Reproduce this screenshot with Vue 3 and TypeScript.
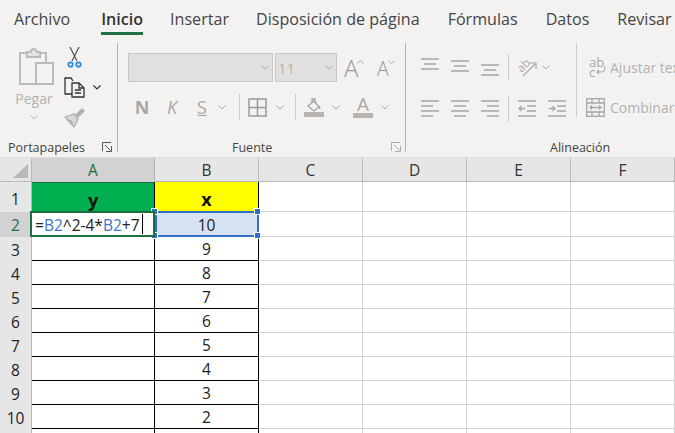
<script setup lang="ts">
const tabs = ['Archivo', 'Inicio', 'Insertar', 'Disposición de página', 'Fórmulas', 'Datos', 'Revisar']
const cols = ['A', 'B', 'C', 'D', 'E', 'F']
const xVals = ['10', '9', '8', '7', '6', '5', '4', '3', '2', '']
const rows = [2, 3, 4, 5, 6, 7, 8, 9, 10, 11]
</script>

<template>
  <div class="app">
    <nav class="tabs">
      <span v-for="t in tabs" :key="t" class="tab" :class="{ active: t === 'Inicio' }">{{ t }}</span>
    </nav>

    <section class="ribbon">
      <div class="group g-clip">
        <div class="group-body clip-body">
          <div class="paste">
            <svg width="35" height="39" viewBox="0 0 35 39" fill="none" stroke="#bdbbb9" stroke-width="2">
              <path d="M8 6H1v31h15" />
              <path d="M21 6h6v9" />
              <path d="M8 10V5h4c0-4 5-4 6 0h3v5z" fill="#e4e3e1" />
              <rect x="17" y="16" width="17" height="21" fill="#f3f2f1" />
            </svg>
            <span class="paste-label">Pegar</span>
            <svg class="paste-chev" width="8" height="5" viewBox="0 0 8 5" fill="none" stroke="#b5b3b1"><path d="M.5.5 4 4 7.500.5" /></svg>
          </div>
          <div class="clip-tools">
            <svg width="15" height="21" viewBox="0 0 15 21" fill="none">
              <path d="M3 0l7 14M12 0 5 14" stroke="#444" stroke-width="1.100" />
              <circle cx="3.500" cy="17.500" r="2.200" stroke="#2b88d8" stroke-width="1.800" />
              <circle cx="11.500" cy="17.500" r="2.200" stroke="#2b88d8" stroke-width="1.800" />
            </svg>
            <div class="copy-row">
              <svg width="21" height="21" viewBox="0 0 21 21" fill="none" stroke="#333" stroke-width="1.300">
                <path d="M8 17H1V1h6l2 3" />
                <path d="M8 6h7l5 5v9H8z" fill="#f3f2f1" />
                <path d="M15 6v5h5M11 13h6M11 16h6" />
              </svg>
              <svg class="copy-chev" width="8" height="5" viewBox="0 0 8 5" fill="none" stroke="#333" stroke-width="1.200"><path d="M.5.5 4 4 7.500.5" /></svg>
            </div>
            <svg width="21" height="20" viewBox="0 0 21 20" fill="none" stroke="#b3b1af" stroke-width="1.300">
              <path d="M12 7l6-6 2 2-6 6" fill="#b3b1af" />
              <path d="M1 9l9-3 4 5-4 8z" fill="#d9d8d6" />
              <path d="M3 12l5 1M5 15l4 0M10 6l4 5" />
            </svg>
          </div>
        </div>
        <div class="group-label clip-label">
          <span>Portapapeles</span>
          <svg width="10" height="10" viewBox="0 0 10 10" fill="none" stroke="#555"><path d="M.5 9V.5H9M3 3l5.500 5.500M4 9.500h5.500V4" /></svg>
        </div>
      </div>

      <div class="group g-font">
        <div class="group-body font-body">
          <div class="row font-r1">
            <div class="select wide"><svg width="8" height="5" viewBox="0 0 8 5" fill="none" stroke="#aaa"><path d="M.5.5 4 4 7.500.5" /></svg></div>
            <div class="select narrow"><span>11</span><svg width="8" height="5" viewBox="0 0 8 5" fill="none" stroke="#aaa"><path d="M.5.5 4 4 7.500.5" /></svg></div>
            <div class="grow-a ml7"><span class="big-a">A</span><svg class="caret" width="7" height="4" viewBox="0 0 7 4" fill="none" stroke="#aaa"><path d="M.5 3.500 3.500.5l3 3" /></svg></div>
            <div class="grow-a small ml10"><span class="mid-a">A</span><svg class="caret" width="7" height="4" viewBox="0 0 7 4" fill="none" stroke="#aaa"><path d="M.5.5l3 3 3-3" /></svg></div>
          </div>
          <div class="row font-r2">
            <span class="tb bold">N</span>
            <span class="tb ital">K</span>
            <span class="tb under">S</span>
            <svg class="chev10" width="10" height="5" viewBox="0 0 10 5" fill="none" stroke="#aaa"><path d="M1.500.5 5 4 8.500.5" /></svg>
            <i class="vsep ml12"></i>
            <svg class="ml8" width="19" height="19" viewBox="0 0 19 19" fill="none" stroke="#9c9a98" stroke-width="1.500"><rect x="1" y="1" width="17" height="17" /><path d="M9.500 1v17M1 9.500h17" /></svg>
            <svg class="chev10 ml8" width="10" height="5" viewBox="0 0 10 5" fill="none" stroke="#aaa"><path d="M1.500.5 5 4 8.500.5" /></svg>
            <i class="vsep ml10"></i>
            <svg class="ml8" width="20" height="20" viewBox="0 0 20 20" fill="none">
              <path d="M4 9l6-5 5 6-5 4z" stroke="#a5a3a1" stroke-width="1.300" />
              <path d="M8 5V2h3v4M15 9l1 3" stroke="#a5a3a1" stroke-width="1.300" />
              <rect y="15" width="20" height="5" fill="#b8b4b2" />
            </svg>
            <svg class="chev10 ml7" width="10" height="5" viewBox="0 0 10 5" fill="none" stroke="#aaa"><path d="M1.500.5 5 4 8.500.5" /></svg>
            <div class="a-color ml12"><span>A</span><i></i></div>
            <svg class="chev10 ml7" width="10" height="5" viewBox="0 0 10 5" fill="none" stroke="#aaa"><path d="M1.500.5 5 4 8.500.5" /></svg>
          </div>
        </div>
        <div class="group-label font-label">
          <span>Fuente</span>
          <svg width="10" height="10" viewBox="0 0 10 10" fill="none" stroke="#b0aeac"><path d="M.5 9V.5H9M3 3l5.500 5.500M4 9.500h5.500V4" /></svg>
        </div>
      </div>

      <div class="group g-align">
        <div class="group-body align-body">
          <div class="align-grid">
            <div class="row al-r1">
              <svg class="up4" width="18" height="12" viewBox="0 0 18 12" stroke="#a9a7a5" stroke-width="1.300"><path d="M0 1h18M3 6h12M0 11h18" /></svg>
              <svg class="ml12 up1" width="18" height="12" viewBox="0 0 18 12" stroke="#a9a7a5" stroke-width="1.300"><path d="M0 1h18M3 6h12M0 11h18" /></svg>
              <svg class="ml12 low" width="18" height="12" viewBox="0 0 18 12" stroke="#a9a7a5" stroke-width="1.300"><path d="M0 1h18M3 6h12M0 11h18" /></svg>
              <i class="vsep ml9"></i>
              <svg class="ml8" width="20" height="19" viewBox="0 0 20 19" fill="none" stroke="#a9a7a5" stroke-width="1.200">
                <path d="M6 18 18 6M13 5h6v6" />
                <text x="0" y="12" font-size="11.500" stroke="none" fill="#a9a7a5" font-family="Open Sans, sans-serif" transform="rotate(-45 6 8)">ab</text>
              </svg>
              <svg class="chev10 ml4" width="10" height="5" viewBox="0 0 10 5" fill="none" stroke="#aaa"><path d="M1.500.5 5 4 8.500.5" /></svg>
            </div>
            <div class="row al-r2">
              <svg width="18" height="18" viewBox="0 0 18 18" stroke="#a9a7a5" stroke-width="1.300"><path d="M0 1h18M0 6h12M0 11h18M0 16h12" /></svg>
              <svg class="ml12" width="18" height="18" viewBox="0 0 18 18" stroke="#a9a7a5" stroke-width="1.300"><path d="M0 1h18M3 6h12M0 11h18M3 16h12" /></svg>
              <svg class="ml12" width="18" height="18" viewBox="0 0 18 18" stroke="#a9a7a5" stroke-width="1.300"><path d="M0 1h18M6 6h12M0 11h18M6 16h12" /></svg>
              <i class="vsep ml9"></i>
              <svg class="ml9" width="18" height="18" viewBox="0 0 18 18" fill="none" stroke="#a9a7a5" stroke-width="1.300"><path d="M0 1h18M9 6h9M9 11h9M0 16h18M1 8.500h6M3.500 6 1 8.500 3.500 11" /></svg>
              <svg class="ml12" width="18" height="18" viewBox="0 0 18 18" fill="none" stroke="#a9a7a5" stroke-width="1.300"><path d="M0 1h18M9 6h9M9 11h9M0 16h18M1 8.500h6M4.500 6 7 8.500 4.500 11" /></svg>
            </div>
          </div>
          <i class="vsep tall"></i>
          <div class="wrap-col">
            <div class="wrap-row">
              <div class="ab-icon">
                <span class="ab-top">ab</span>
                <span class="ab-bot">c</span>
                <svg width="10" height="10" viewBox="0 0 10 10" fill="none" stroke="#a9a7a5" stroke-width="1.100"><path d="M8 0c2 3 1 6-3 6H1M3 4 1 6l2 2" /></svg>
              </div>
              <span class="dim-text">Ajustar texto</span>
            </div>
            <div class="wrap-row merge-row">
              <svg width="19" height="19" viewBox="0 0 19 19" fill="none" stroke="#a9a7a5" stroke-width="1.300">
                <rect x=".7" y=".7" width="17.600" height="17.600" />
                <path d="M1 5h17M1 14h17M6 1v4M13 1v4M6 14v4M13 14v4" />
                <path d="M4 9.500h11M6 7.500l-2 2 2 2M13 7.500l2 2-2 2" />
              </svg>
              <span class="dim-text">Combinar y centrar</span>
            </div>
          </div>
        </div>
        <div class="group-label align-label"><span>Alineación</span></div>
      </div>
    </section>

    <div class="sheet">
      <div class="corner"><i></i></div>
      <div v-for="c in cols" :key="c" class="col-head" :class="{ sel: c === 'A' }">{{ c }}</div>

      <div class="row-head r1">1</div>
      <div class="cell r1 boxed head-y">y</div>
      <div class="cell r1 boxed head-x">x</div>
      <div v-for="n in 4" :key="'a' + n" class="cell r1"></div>

      <template v-for="(r, i) in rows" :key="r">
        <div class="row-head" :class="{ sel: r === 2 }">{{ r }}</div>
        <div class="cell boxed" :class="{ editing: r === 2 }">
          <template v-if="r === 2">
            <span class="formula">=<b>B2</b>^2-4*<b>B2</b>+7</span>
          </template>
        </div>
        <div class="cell boxed num" :class="{ picked: r === 2 }">
          {{ xVals[i] }}
          <template v-if="r === 2">
            <i class="handle tl"></i><i class="handle tr"></i><i class="handle bl"></i><i class="handle br"></i>
          </template>
        </div>
        <div v-for="n in 4" :key="n" class="cell"></div>
      </template>
    </div>
  </div>
</template>

<style>
html, body { margin: 0; padding: 0; overflow: hidden; background: #fff; }
</style>

<style scoped>
.app {
  width: 675px;
  height: 433px;
  overflow: hidden;
  font-family: "Open Sans", "Noto Sans", sans-serif;
  background: #f3f2f1;
  color: #444;
}
.tabs {
  height: 36px;
  display: flex;
  align-items: flex-start;
  padding-left: 14px;
  gap: 27px;
  font-size: 16.100px;
  white-space: nowrap;
  overflow: hidden;
}
.tab { height: 32px; line-height: 38px; flex: none; }
.tab:first-child { margin-right: 4px; }
.tab:nth-child(n + 5) { margin-left: 1px; }
.tab.active { font-weight: 600; color: #333; border-bottom: 3px solid #217346; }
.ribbon { height: 121px; display: flex; overflow: hidden; }
.group {
  margin-top: 7px;
  height: 109px;
  display: flex;
  flex-direction: column;
  box-sizing: border-box;
  border-right: 1px solid #b5b3b1;
  flex: none;
}
.g-clip { width: 118px; }
.g-font { width: 288px; }
.g-align { flex: 1; border-right: 0; min-width: 0; overflow: hidden; }
.group-body { height: 95px; flex: none; box-sizing: border-box; }
.group-label { height: 18px; flex: none; display: flex; align-items: center; font-size: 12.500px; color: #444; }
.clip-label { padding-left: 8px; }
.clip-label svg { margin-left: 17px; }
.font-label { padding-left: 114px; color: #444; }
.font-label svg { margin-left: 119px; }
.align-label { justify-content: flex-start; padding-left: 144px; }
.row { display: flex; align-items: center; }
.ml4 { margin-left: 4px; }
.ml7 { margin-left: 7px; }
.ml8 { margin-left: 8px; }
.ml9 { margin-left: 9px; }
.ml10 { margin-left: 10px; }
.ml12 { margin-left: 12px; }
.vsep { width: 1px; height: 26px; background: #cfcdcb; display: block; flex: none; }

.clip-body { display: flex; padding: 4px 0 0 15px; }
.paste { width: 38px; display: flex; flex-direction: column; align-items: center; flex: none; }
.paste svg:first-child { margin-left: 5px; }
.paste-label { font-size: 14px; color: #b3b1af; margin-top: 3px; line-height: 20px; }
.paste-chev { margin-top: 6px; }
.clip-tools { margin-left: 11px; display: flex; flex-direction: column; align-items: flex-start; }
.clip-tools > svg:first-child { margin-left: 3px; }
.copy-row { display: flex; align-items: center; margin-top: 9px; margin-bottom: 10px; }
.copy-chev { margin-left: 8px; }

.font-body { padding: 10px 0 0 10px; }
.select {
  box-sizing: border-box;
  height: 29px;
  background: #e1e0de;
  border: 1px solid #cbc9c7;
  display: flex;
  align-items: center;
  justify-content: flex-end;
  padding-right: 3px;
}
.select.wide { width: 145px; }
.select.narrow { width: 62px; margin-left: 2px; justify-content: space-between; padding-left: 2px; font-size: 15px; color: #b8b2a8; }
.grow-a { display: flex; align-items: flex-start; width: 23px; color: #9a9896; line-height: 1; }
.big-a { font-size: 24px; font-weight: 300; }
.mid-a { font-size: 19.500px; font-weight: 300; margin-top: 3px; }
.caret { margin-top: 4px; flex: none; margin-left: -1px; }
.font-r1 { height: 29px; }
.font-r2 { margin-top: 14px; height: 22px; }
.tb { width: 30px; text-align: center; font-size: 18px; color: #a9a7a5; line-height: 22px; flex: none; }
.tb.bold { font-weight: 700; margin-left: -1px; }
.tb.ital { font-style: italic; }
.tb.under { text-decoration: underline; }
.chev10 { flex: none; }
.a-color { width: 20px; display: flex; flex-direction: column; align-items: center; color: #a9a7a5; font-size: 19px; line-height: 17px; }
.a-color i { display: block; width: 20px; height: 5px; background: #b8b4b2; }

.align-body { display: flex; padding: 0 0 0 15px; }
.align-grid { width: 155px; flex: none; padding-top: 11px; }
.up4 { margin-top: -7px; }
.up1 { margin-top: -2px; }
.low { margin-top: 6px; }
.al-r1 { height: 26px; }
.al-r2 { margin-top: 16px; height: 26px; }
.vsep.tall { height: 74px; }
.wrap-col { padding-left: 9px; white-space: nowrap; font-size: 14px; }
.wrap-row { display: flex; align-items: center; height: 26px; margin-top: 11px; }
.merge-row { margin-top: 14px; }
.merge-row svg { flex: none; margin-right: 5px; }
.ab-icon { width: 21px; height: 24px; margin-left: 3px; position: relative; flex: none; color: #a9a7a5; font-size: 13px; line-height: 10px; }
.ab-icon span { position: absolute; left: 0; }
.ab-top { top: 2px; }
.ab-bot { top: 12px; }
.ab-icon svg { position: absolute; left: 7px; top: 11px; }
.dim-text { color: #b3b1af; }

.sheet {
  display: grid;
  grid-template-columns: 32px 123px 104px 104px 104px 104px 104px;
  grid-template-rows: 24px 30px 25px repeat(9, 24px);
  background: #fff;
  border-top: 1px solid #dcdcdc;
  box-sizing: border-box;
  font-family: "Open Sans", "Noto Sans", sans-serif;
  color: #222;
}
.corner { background: #e6e6e6; border-right: 1px solid #b8b8b8; border-bottom: 1px solid #b8b8b8; box-sizing: border-box; position: relative; }
.corner i { position: absolute; right: 3px; bottom: 3px; border-style: solid; border-width: 0 0 14px 15px; border-color: transparent transparent #b9b9b9 transparent; }
.col-head {
  background: #e6e6e6;
  border-right: 1px solid #b8b8b8;
  border-bottom: 1px solid #b8b8b8;
  box-sizing: border-box;
  text-align: center;
  font-size: 15.500px;
  line-height: 24px;
  color: #333;
}
.col-head.sel { background: #d2d2d2; color: #1f6e46; border-bottom: 0; }
.row-head {
  background: #e6e6e6;
  border-right: 1px solid #b8b8b8;
  box-sizing: border-box;
  text-align: center;
  font-size: 15.500px;
  line-height: 26px;
  color: #222;
}
.row-head.r1 { line-height: 34px; }
.row-head.sel { background: #d2d2d2; color: #1f6e46; }
.cell {
  border-right: 1px solid #d4d4d4;
  border-bottom: 1px solid #d4d4d4;
  box-sizing: border-box;
  position: relative;
}
.cell.boxed { border-right-color: #000; border-bottom-color: #000; }
.head-y { background: #00b050; border-top: 1px solid #1d6f42; text-align: center; font-weight: 700; font-size: 18px; color: #111; line-height: 34px; }
.head-x { background: #ffff00; text-align: center; font-weight: 700; font-size: 18px; color: #111; line-height: 34px; }
.num { text-align: center; font-size: 15.500px; line-height: 24px; color: #222; }
.editing { z-index: 3; background: #fff; }
.editing::after {
  content: "";
  position: absolute;
  top: -1px;
  left: -2px;
  right: -1px;
  bottom: -1px;
  border: 2px solid #1d6f42;
  pointer-events: none;
}
.formula { display: inline-block; font-size: 15.500px; padding: 0 2px 0 3px; border-right: 1px solid #000; height: 20px; margin-top: 2px; vertical-align: top; line-height: 22px; color: #222; }
.formula b { font-weight: 400; color: #3f76c6; }
.picked { background: #d6e1f2; z-index: 2; line-height: 26px; }
.picked::after {
  content: "";
  position: absolute;
  top: -1px;
  left: 0;
  right: -1px;
  bottom: -1px;
  border: 2px solid #2f6fc8;
  pointer-events: none;
}
.handle { position: absolute; width: 5px; height: 5px; background: #2f6fc8; border: 1px solid #fff; z-index: 4; }
.tl { left: -4px; top: -4px; }
.tr { right: -3px; top: -4px; }
.bl { left: -4px; bottom: -3px; }
.br { right: -3px; bottom: -3px; }
</style>
